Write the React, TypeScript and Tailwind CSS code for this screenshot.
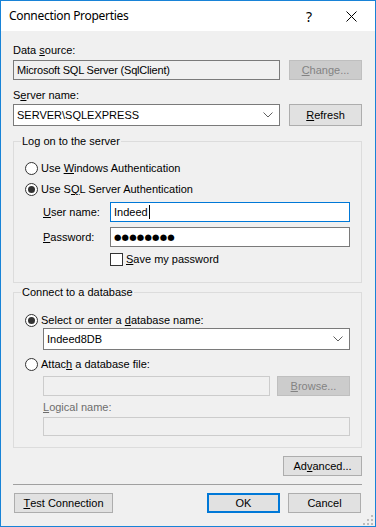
import type { ReactNode } from 'react';

const Chevron = () => (
  <svg width="10" height="6" viewBox="0 0 10 6" className="shrink-0">
    <path d="M0.5 0.5 L5 5 L9.5 0.5" fill="none" stroke="#606060" strokeWidth="1" />
  </svg>
);

const Radio = ({ checked }: { checked?: boolean }) => (
  <span className="flex h-[13px] w-[13px] shrink-0 items-center justify-center rounded-full border border-[#333333] bg-white">
    {checked && <span className="h-[7px] w-[7px] rounded-full bg-[#333333]" />}
  </span>
);

const Btn = ({
  children,
  className = '',
  disabled,
  primary,
}: {
  children: ReactNode;
  className?: string;
  disabled?: boolean;
  primary?: boolean;
}) => (
  <button
    type="button"
    className={
      disabled
        ? `flex items-center justify-center border border-[#bfbfbf] bg-[#cccccc] text-[#838383] ${className}`
        : primary
          ? `flex items-center justify-center border-2 border-[#0078d7] bg-[#e1e1e1] text-black ${className}`
          : `flex items-center justify-center border border-[#adadad] bg-[#e1e1e1] text-black ${className}`
    }
  >
    {children}
  </button>
);

const GroupBox = ({ title, className = '', children }: { title: string; className?: string; children: ReactNode }) => (
  <div className={`relative border border-[#dcdcdc] ${className}`}>
    <span className="absolute -top-[8px] left-[7px] bg-[#f0f0f0] px-[1px] leading-[14px]">{title}</span>
    {children}
  </div>
);

export default function App() {
  return (
    <div className="flex h-[527px] w-[376px] flex-col border border-[#1883d7] bg-[#f0f0f0] text-[11px] text-black font-['Liberation_Sans',Arial,sans-serif]">
      <div className="flex h-[30px] shrink-0 items-center bg-white pl-[8px] text-[12px] font-['Noto_Sans',sans-serif]">
        <span className="flex-1 tracking-[-0.3px]">Connection Properties</span>
        <span className="mr-[34px] text-[14px]">?</span>
        <svg width="11" height="11" viewBox="0 0 11 11" className="mr-[18px]">
          <path d="M0.5 0.5 L10.5 10.5 M10.5 0.5 L0.5 10.5" stroke="#000" strokeWidth="1" />
        </svg>
      </div>

      <div className="flex flex-1 flex-col pl-[12px] pr-[13px]">
        <div className="mt-[12px] h-[15px] leading-[15px]">
          Data <span className="underline">s</span>ource:
        </div>
        <div className="mt-[2px] flex h-[20px] gap-[9px]">
          <div className="flex w-[267px] items-center border border-[#7a7a7a] pl-[3px] tracking-[-0.2px]">
            Microsoft SQL Server (SqlClient)
          </div>
          <Btn disabled className="w-[73px]">
            <span className="underline">C</span>hange...
          </Btn>
        </div>

        <div className="mt-[8px] h-[15px] leading-[15px]">
          S<span className="underline">e</span>rver name:
        </div>
        <div className="mt-[1px] flex h-[22px] gap-[9px]">
          <div className="flex w-[267px] items-center border border-[#7a7a7a] bg-white pl-[3px] pr-[6px]">
            <span className="flex-1">SERVER\SQLEXPRESS</span>
            <Chevron />
          </div>
          <Btn className="w-[73px]">
            <span className="underline">R</span>efresh
          </Btn>
        </div>

        <GroupBox title="Log on to the server" className="mt-[15px] h-[142px] pl-[11px] pt-[18px]">
          <div className="flex h-[17px] items-center gap-[3px]">
            <Radio />
            <span>
              Use <span className="underline">W</span>indows Authentication
            </span>
          </div>
          <div className="mt-[4px] flex h-[17px] items-center gap-[3px]">
            <Radio checked />
            <span>
              Use S<span className="underline">Q</span>L Server Authentication
            </span>
          </div>
          <div className="mt-[4px] flex h-[20px] items-center pl-[18px]">
            <span className="w-[67px]">
              <span className="underline">U</span>ser name:
            </span>
            <div className="flex h-[20px] w-[240px] items-center border border-[#0078d7] bg-white pl-[3px]">
              Indeed
              <span className="ml-[1px] h-[14px] w-[1px] bg-black" />
            </div>
          </div>
          <div className="mt-[5px] flex h-[20px] items-center pl-[18px]">
            <span className="w-[67px]">
              <span className="underline">P</span>assword:
            </span>
            <div className="flex h-[20px] w-[240px] items-center border border-[#7a7a7a] bg-white pl-[3px] text-[8.5px] tracking-[0.2px] font-['DejaVu_Sans',sans-serif]">
              ●●●●●●●●
            </div>
          </div>
          <div className="mt-[6px] flex h-[13px] items-center gap-[3px] pl-[85px]">
            <span className="h-[13px] w-[13px] border border-[#333333] bg-white" />
            <span>
              <span className="underline">S</span>ave my password
            </span>
          </div>
        </GroupBox>

        <GroupBox title="Connect to a database" className="mt-[9px] h-[156px] pl-[11px] pt-[19px]">
          <div className="flex h-[17px] items-center gap-[3px]">
            <Radio checked />
            <span>
              Select or enter a <span className="underline">d</span>atabase name:
            </span>
          </div>
          <div className="ml-[18px] mt-[-1px] flex h-[22px] w-[307px] items-center border border-[#7a7a7a] bg-white pl-[3px] pr-[6px]">
            <span className="flex-1">Indeed8DB</span>
            <Chevron />
          </div>
          <div className="mt-[6px] flex h-[17px] items-center gap-[3px]">
            <Radio />
            <span>
              Attac<span className="underline">h</span> a database file:
            </span>
          </div>
          <div className="ml-[18px] mt-[3px] flex h-[20px] gap-[7px]">
            <div className="w-[227px] border border-[#cccccc]" />
            <Btn disabled className="w-[73px]">
              <span className="underline">B</span>rowse...
            </Btn>
          </div>
          <div className="ml-[18px] mt-[4px] h-[15px] leading-[15px] text-[#6d6d6d]">
            <span className="underline">L</span>ogical name:
          </div>
          <div className="ml-[18px] mt-[2px] h-[19px] w-[307px] border border-[#cccccc]" />
        </GroupBox>

        <div className="mt-[8px] flex justify-end">
          <Btn className="h-[20px] w-[79px]">
            Ad<span className="underline">v</span>anced...
          </Btn>
        </div>

        <div className="mt-[8px] h-[1px] w-[349px] bg-[#a0a0a0]" />

        <div className="mt-[8px] flex h-[20px]">
          <Btn className="ml-[1px] w-[99px]">
            <span className="underline">T</span>est Connection
          </Btn>
          <Btn primary className="ml-[94px] w-[73px]">
            OK
          </Btn>
          <Btn className="ml-[8px] w-[73px]">Cancel</Btn>
        </div>

        <div className="mt-auto flex justify-end pb-[1px]">
          <svg width="10" height="10" viewBox="0 0 10 10" className="-mr-[11px]">
            <rect x="8" y="0" width="2" height="2" fill="#bcbcbc" />
            <rect x="4" y="4" width="2" height="2" fill="#bcbcbc" />
            <rect x="8" y="4" width="2" height="2" fill="#bcbcbc" />
            <rect x="0" y="8" width="2" height="2" fill="#bcbcbc" />
            <rect x="4" y="8" width="2" height="2" fill="#bcbcbc" />
            <rect x="8" y="8" width="2" height="2" fill="#bcbcbc" />
          </svg>
        </div>
      </div>
    </div>
  );
}
